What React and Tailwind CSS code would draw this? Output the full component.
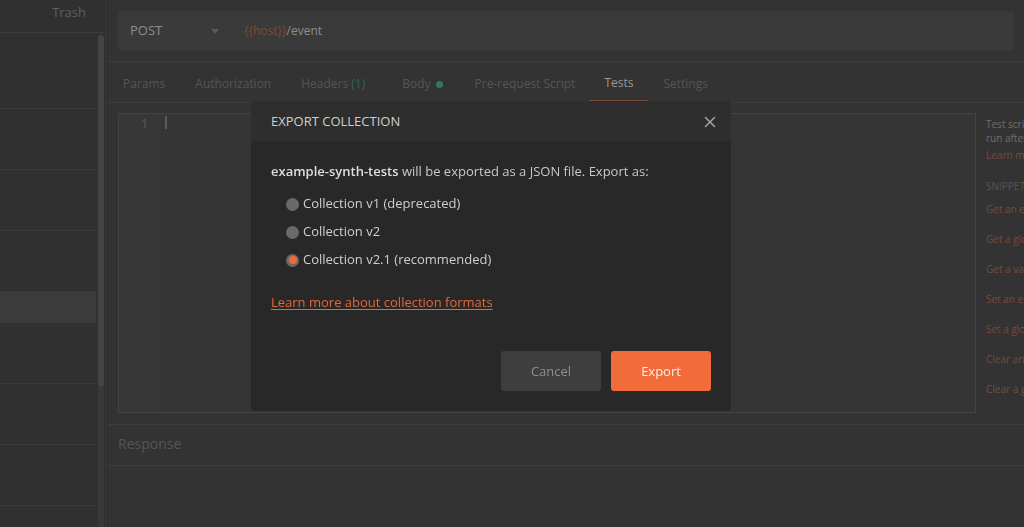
import { X } from "lucide-react";

const font = { fontFamily: '"Open Sans", "Noto Sans", sans-serif' };

const Sidebar = () => {
  const rows = [76, 61, 61, 61, 31, 61, 61, 61];
  return (
    <aside className="w-[107px] h-full flex flex-col bg-[#303030] border-r border-[#3a3a3a] shrink-0">
      <div className="h-[33px] flex justify-end items-center pr-[20px] pb-[6px] text-[13px] text-[#5e5e5e] border-b border-[#3c3c3c] shrink-0">
        Trash
      </div>
      <div className="flex flex-1 overflow-hidden">
        <div className="w-[96px] flex flex-col">
          {rows.map((h, i) => (
            <div
              key={i}
              style={{ height: h }}
              className={
                i === 4
                  ? "bg-[#3b3b3b] shrink-0"
                  : "border-b border-[#3a3a3a] shrink-0"
              }
            />
          ))}
        </div>
        <div className="w-[6px] ml-[2px] flex flex-col">
          <div className="h-[352px] mt-[2px] rounded-full bg-[#454545]" />
          <div className="flex-1 bg-[#383838]" />
        </div>
      </div>
    </aside>
  );
};

const Tabs = () => (
  <div className="h-[41px] flex items-end border-b border-[#3d3d3d] pl-[15px] text-[12px] text-[#555555] shrink-0">
    <div className="pb-[9px] mr-[30px]">Params</div>
    <div className="pb-[9px] mr-[30px]">Authorization</div>
    <div className="pb-[9px] mr-[37px]">
      Headers <span className="text-[#2f6a50]">(1)</span>
    </div>
    <div className="pb-[9px] mr-[32px] flex items-center gap-[5px]">
      Body <span className="w-[7px] h-[7px] rounded-full bg-[#2c7a5a] inline-block" />
    </div>
    <div className="pb-[9px] mr-[14px]">Pre-request Script</div>
    <div className="pb-[8px] px-[15px] text-[#999999] border-b-[2px] border-[#7a4a38]">Tests</div>
    <div className="pb-[9px] ml-[15px]">Settings</div>
  </div>
);

const snippets = [
  "Get an environment variable",
  "Get a global variable",
  "Get a variable",
  "Set an environment variable",
  "Set a global variable",
  "Clear an environment variable",
  "Clear a global variable",
];

const Editor = () => (
  <div className="flex pl-[10px] pt-[10px] h-[321px] shrink-0">
    <div className="w-[858px] h-[300px] border border-[#434343] flex shrink-0">
      <div className="w-[42px] bg-[#373737] flex justify-end pr-[13px] pt-[1px] text-[12px] text-[#5c5c5c]">1</div>
      <div className="flex-1 bg-[#353535] pl-[4px] pt-[2px]">
        <div className="w-[2px] h-[13px] bg-[#5a5a5a]" />
      </div>
    </div>
    <div className="flex-1 min-w-0 pl-[10px] pt-[4px] text-[10px] leading-[14px] whitespace-nowrap overflow-hidden">
      <div className="text-[#6e6e6e]">Test scripts are written in JavaScript, and are</div>
      <div className="text-[#6e6e6e]">run after the response is received.</div>
      <div className="text-[#7a4a38] mt-[3px]">Learn more about tests scripts</div>
      <div className="text-[#555555] mt-[17px]">SNIPPETS</div>
      {snippets.map((s, i) => (
        <div key={i} className={`text-[#7a4a38] ${i === 0 ? "mt-[9px]" : "mt-[16px]"}`}>
          {s}
        </div>
      ))}
    </div>
  </div>
);

const Modal = () => (
  <div className="fixed inset-0 flex items-start justify-center pt-[101px] pr-[42px]">
    <div className="w-[480px] h-[310px] bg-[#282828] rounded-[3px] flex flex-col">
      <div className="h-[40px] bg-[#2e2e2e] flex items-center justify-between pl-[20px] pr-[12px] pt-[1px] rounded-t-[3px]">
        <span className="text-[13px] text-[#cfcfcf]">EXPORT COLLECTION</span>
        <X size={18} strokeWidth={2} className="text-[#a5a5a5]" />
      </div>
      <div className="flex-1 flex flex-col px-[20px] pt-[21px]">
        <p className="text-[13px] text-[#c9c9c9]">
          <span className="font-semibold text-[#dedede]">example-synth-tests</span> will be exported as a JSON file. Export as:
        </p>
        <div className="flex flex-col gap-[9px] mt-[13px] pl-[15px] text-[13px] text-[#cfcfcf]">
          {["Collection v1 (deprecated)", "Collection v2", "Collection v2.1 (recommended)"].map((t, i) => (
            <div key={t} className="flex items-center gap-[4px] h-[19px]">
              {i === 2 ? (
                <span className="w-[13px] h-[13px] rounded-full bg-[#6a6a6a] flex items-center justify-center">
                  <span className="w-[8px] h-[8px] rounded-full bg-[#f06a3a]" />
                </span>
              ) : (
                <span className="w-[13px] h-[13px] rounded-full bg-[#6a6a6a]" />
              )}
              {t}
            </div>
          ))}
        </div>
        <a className="mt-[23px] text-[13px] text-[#e0683c] underline underline-offset-2 w-fit">
          Learn more about collection formats
        </a>
        <div className="flex justify-end gap-[10px] mt-[39px]">
          <button className="w-[100px] h-[40px] pt-[1px] rounded-[3px] bg-[#3e3e3e] text-[13px] text-[#8e8e8e]">Cancel</button>
          <button className="w-[100px] h-[40px] pt-[1px] rounded-[3px] bg-[#f26b3a] text-[13px] text-[#f6f1ee]">Export</button>
        </div>
      </div>
    </div>
  </div>
);

export default function App() {
  return (
    <div className="w-[1024px] h-[527px] flex bg-[#333333] overflow-hidden" style={font}>
      <Sidebar />
      <main className="flex-1 min-w-0 flex flex-col bg-[#333333] border-l border-[#2b2b2b]">
        <div className="h-[62px] flex items-start px-[10px] pt-[11px] border-b border-[#3d3d3d] shrink-0">
          <div className="w-[896px] h-[40px] bg-[#3a3a3a] rounded-[3px] border border-[#383838] flex items-center">
            <div className="w-[115px] h-full flex items-center justify-between pl-[11px] pr-[14px] border-r border-[#363636] text-[13px] text-[#8e8e8e]">
              POST
              <span className="w-0 h-0 border-l-[4px] border-r-[4px] border-t-[5px] border-l-transparent border-r-transparent border-t-[#5a5a5a]" />
            </div>
            <div className="pl-[10px] text-[12px] text-[#8e8e8e]">
              <span className="text-[#7a4a38]">{"{{host}}"}</span>/event
            </div>
          </div>
        </div>
        <Tabs />
        <Editor />
        <div className="h-[42px] border-t border-b border-[#3d3d3d] flex items-center pl-[10px] pb-[3px] text-[14px] text-[#555555] shrink-0">
          Response
        </div>
        <div className="flex-1" />
      </main>
      <Modal />
    </div>
  );
}
